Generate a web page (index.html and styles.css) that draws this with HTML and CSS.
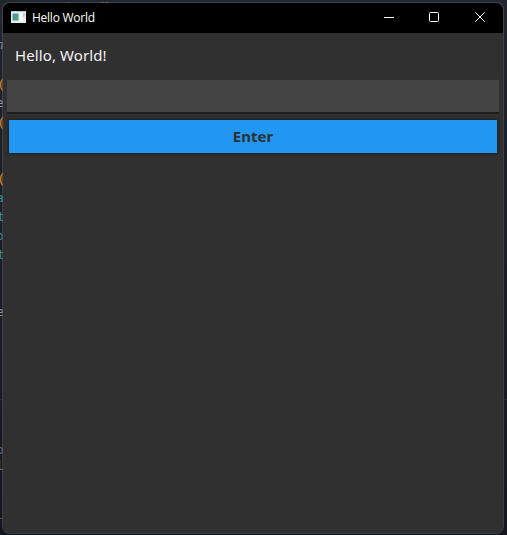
FILE: index.html
```
<!DOCTYPE html>
<html lang="en">
<head>
<meta charset="utf-8">
<title>Hello World</title>
<link rel="stylesheet" href="styles.css">
</head>
<body>
<div class="editor" aria-hidden="true">
  <svg width="507" height="535" viewBox="0 0 507 535">
    <path d="M0 399.500H507" stroke="#292e35"/>
    <path d="M67 2.500h3" stroke="#267b86"/>
    <path d="M101 2.500h3M105 2.500h3" stroke="#b8862d"/>
    <g fill="none" stroke="#b9801d" stroke-width="1.500">
      <path d="M3 79Q-2 85 3 91M3 117Q-2 123 3 129M3 173Q-2 179 3 186"/>
    </g>
    <path d="M2 82v6M2 120v6M2 176v6" stroke="#8d3022"/>
  </svg>
  <span class="glyph gray g1">n</span>
  <span class="glyph gray g2">e</span>
  <span class="glyph teal g3">a</span>
  <span class="glyph teal g4">t</span>
  <span class="glyph teal g5">o</span>
  <span class="glyph teal g6">t</span>
  <span class="glyph gray g7">e</span>
  <span class="glyph dim g8">o</span>
  <span class="glyph dim g9">l</span>
  <span class="glyph dim g10">_</span>
</div>
<main class="window">
  <header class="titlebar">
    <svg class="app-icon" width="15" height="12" viewBox="0 0 15 12">
      <defs><linearGradient id="screen" x2="1" y2="1"><stop stop-color="#548cc1"/><stop offset="1" stop-color="#4aa768"/></linearGradient></defs>
      <path fill="#e9eeee" d="M0 0h15v12H0z"/>
      <path fill="#b9c5cd" d="M0 0h15v1H0z"/>
      <path fill="url(#screen)" d="M1.500 2.500h6v7h-6z"/>
      <path fill="#fff" d="M9 2h2v8H9z"/>
      <path fill="#c8d1cd" d="M12 2h2v4h-2z"/>
    </svg>
    <h1 class="title">Hello World</h1>
    <div class="controls">
      <svg width="46" height="30" viewBox="0 0 46 30"><path d="M11 14.500h10"/></svg>
      <svg width="45" height="30" viewBox="0 0 45 30"><rect x="10.500" y="9.500" width="9" height="9" rx="1"/></svg>
      <svg width="45" height="30" viewBox="0 0 45 30"><path d="M11.200 9.200l9.600 9.600M20.800 9.200l-9.600 9.600"/></svg>
    </div>
  </header>
  <p class="label">Hello, World!</p>
  <input class="field" type="text" aria-label="Input">
  <button class="enter" type="button">Enter</button>
</main>
</body>
</html>
```
FILE: styles.css
```
* { box-sizing: border-box; }

body {
  margin: 0;
  height: 535px;
  overflow: hidden;
  background: linear-gradient(#22262f, #1b1f26 30%, #191c23 70%, #15171f);
  font-family: "Noto Sans", sans-serif;
}

.editor {
  position: absolute;
  inset: 0;
}

.editor svg { display: block; }

.glyph {
  position: absolute;
  left: -4px;
  font: 13px/18px "DejaVu Sans Mono", monospace;
}

.gray { color: #92979c; }
.teal { color: #38969a; }
.dim { color: #74766f; }
.g1 { top: 36px; font-style: italic; }
.g2 { top: 94px; }
.g3 { top: 189px; }
.g4 { top: 208px; left: -3px; }
.g5 { top: 227px; }
.g6 { top: 246px; left: -3px; }
.g7 { top: 303px; }
.g8 { top: 441px; }
.g9 { top: 457px; }
.g10 { top: 503px; }

.window {
  position: relative;
  display: flex;
  flex-direction: column;
  width: 502px;
  height: 532px;
  margin: 2px;
  overflow: hidden;
  border: 1px solid rgba(85, 87, 92, 0.6);
  border-radius: 8px;
  background: #303030;
  background-clip: padding-box;
}

.titlebar {
  display: flex;
  align-items: center;
  flex: none;
  height: 30px;
  padding-left: 8px;
  background: #000;
}

.app-icon {
  flex: none;
  margin-bottom: 2px;
}

.title {
  margin: 0 0 0 6px;
  color: #fff;
  font: 12px/18px "Open Sans", sans-serif;
  letter-spacing: -0.25px;
}

.controls {
  display: flex;
  margin-left: auto;
  margin-right: -6px;
  fill: none;
  stroke: #fff;
}

.label {
  flex: none;
  margin: 11px 12px 0;
  color: #f4f4f4;
  font-size: 15px;
  line-height: 22px;
  letter-spacing: 0.1px;
}

.field {
  flex: none;
  height: 34px;
  margin: 14px 4px 0;
  padding: 0 8px;
  border: 0;
  border-bottom: 2px solid #1e1e1e;
  outline: 0;
  background: #444;
  color: #fff;
  font: 15px "Noto Sans", sans-serif;
}

.enter {
  flex: none;
  height: 33px;
  margin: 6px 6px 0;
  padding: 0;
  border: 0;
  background: #2196f3;
  box-shadow: 0 0 2px 1px #202020;
  color: #303030;
  font: bold 15px/33px "Noto Sans", sans-serif;
}
```
